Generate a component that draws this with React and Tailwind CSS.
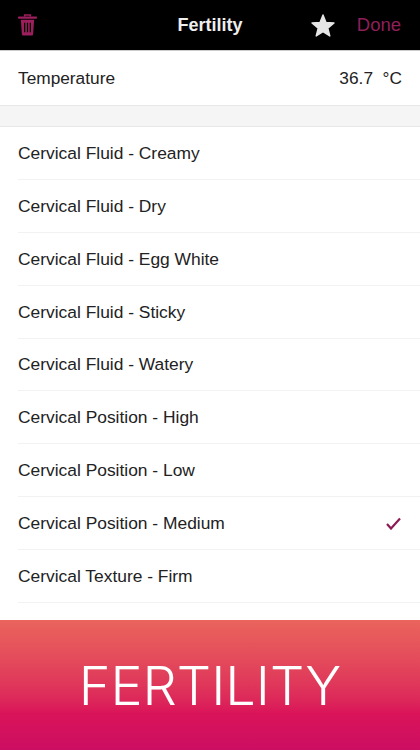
import React from 'react';

const rows = [
  'Cervical Fluid - Creamy',
  'Cervical Fluid - Dry',
  'Cervical Fluid - Egg White',
  'Cervical Fluid - Sticky',
  'Cervical Fluid - Watery',
  'Cervical Position - High',
  'Cervical Position - Low',
  'Cervical Position - Medium',
  'Cervical Texture - Firm',
];

const TrashIcon = () => (
  <svg width="19" height="24" viewBox="0 0 20 24" fill="none" className="text-[#9b1f5c]">
    <path d="M7 3V1.5h6V3" stroke="currentColor" strokeWidth="1.6" />
    <path d="M1 4.2h18" stroke="currentColor" strokeWidth="2.4" strokeLinecap="round" />
    <path d="M3 6.5h14l-1.1 15.2a1.4 1.4 0 0 1-1.4 1.3h-8.999a1.4 1.4 0 0 1-1.4-1.3z" fill="currentColor" />
    <path d="M7 9.5v10M10 9.5v10M13 9.5v10" stroke="#000" strokeWidth="1.3" />
  </svg>
);

const StarIcon = () => (
  <svg width="24" height="23" viewBox="0 0 24 23" className="text-[#e6e6e6]">
    <path d="M12 1l3 7.4 8 .5-6.2 5.2 2 7.9L12 17.7l-6.800 4.300 2-7.900L1 8.900l8-.5z" fill="currentColor" stroke="currentColor" strokeWidth="1.4" strokeLinejoin="round" />
  </svg>
);

const CheckIcon = () => (
  <svg width="15" height="13" viewBox="0 0 15 13" fill="none">
    <path d="M1 7l4 4.5L14 1.500" stroke="#8e1a55" strokeWidth="2.200" />
  </svg>
);

export default function App() {
  return (
    <div className="w-[420px] h-[750px] flex flex-col overflow-hidden bg-white font-['Liberation_Sans',sans-serif] text-[#222]">
      <div className="h-[51px] shrink-0 bg-black relative flex items-center justify-between pl-[18px] pr-[19px] border-b border-[#ccc]">
        <TrashIcon />
        <span className="absolute left-0 right-0 text-center text-[18px] font-bold text-[#eee]">Fertility</span>
        <div className="flex items-center gap-[22px]">
          <StarIcon />
          <span className="text-[18.5px] text-[#8e1f58]">Done</span>
        </div>
      </div>

      <div className="h-[55px] shrink-0 flex items-center justify-between px-[18px] pt-[2px] text-[17.3px] border-b border-[#e8e8e8]">
        <span>Temperature</span>
        <span className="whitespace-pre">36.7  °C</span>
      </div>
      <div className="h-[21px] shrink-0 bg-[#f5f5f5] border-b border-[#e8e8e8]" />

      <div className="flex-1 min-h-0 pl-[18px] text-[17.4px]">
        {rows.map((r) => (
          <div key={r} className="h-[52.9px] flex items-center justify-between pr-[19px] border-b border-[#f2f2f2]">
            <span>{r}</span>
            {r === 'Cervical Position - Medium' && <CheckIcon />}
          </div>
        ))}
      </div>

      <div className="h-[130px] shrink-0 flex items-center justify-center pt-[2px] bg-gradient-to-b from-[#ea645c] via-[#da1359] via-[72%] to-[#cc0e62]">
        <span className="font-['Inter',sans-serif] font-light text-[54px] leading-none text-white">FERTILITY</span>
      </div>
    </div>
  );
}
